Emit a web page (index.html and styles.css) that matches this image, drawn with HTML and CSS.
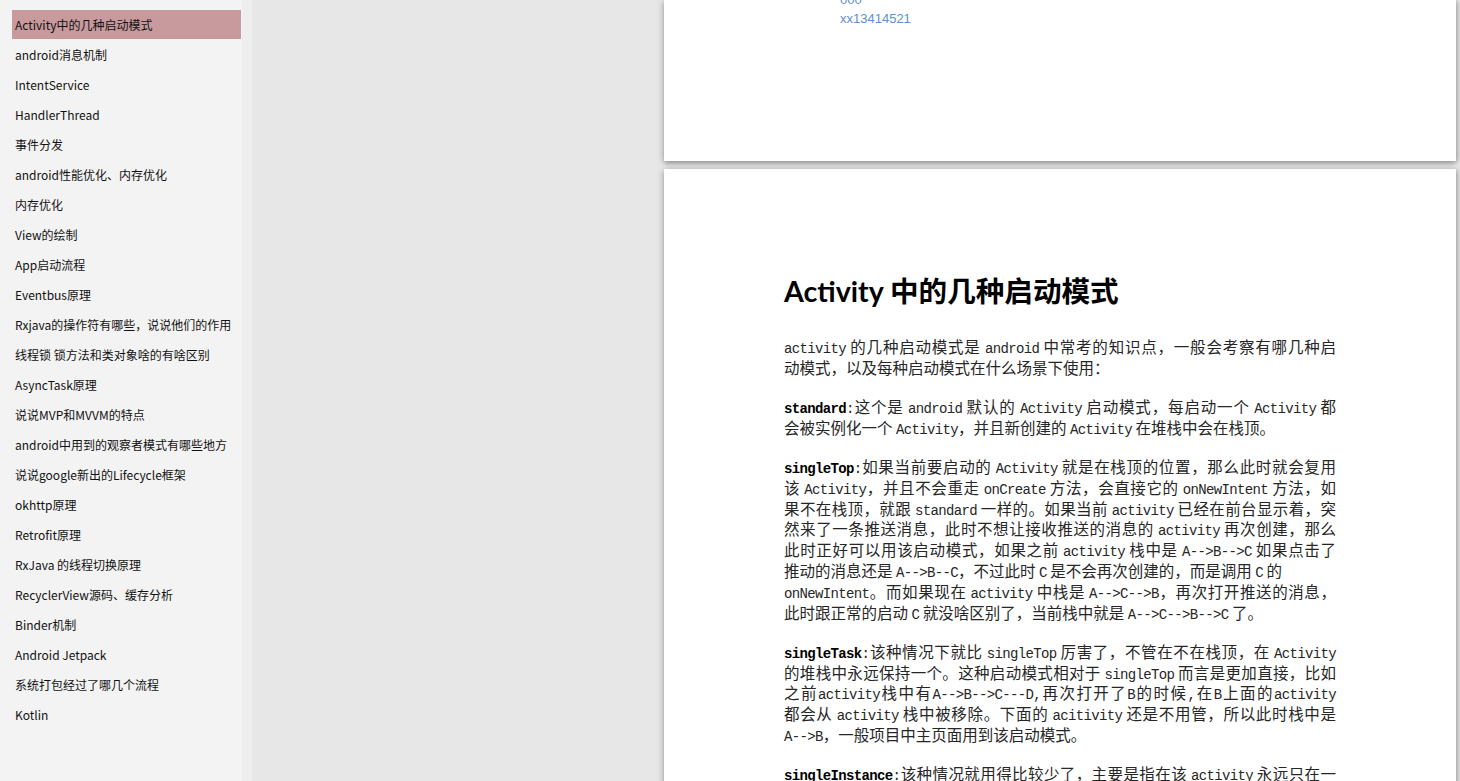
FILE: index.html
```html
<!DOCTYPE html>
<html lang="zh-CN">
<head>
<meta charset="utf-8">
<title>Activity中的几种启动模式</title>
<link rel="stylesheet" href="styles.css">
</head>
<body>
<aside class="sidebar">
  <ul class="toc">
    <li class="item active">Activity中的几种启动模式</li>
    <li class="item">android消息机制</li>
    <li class="item">IntentService</li>
    <li class="item">HandlerThread</li>
    <li class="item">事件分发</li>
    <li class="item">android性能优化、内存优化</li>
    <li class="item">内存优化</li>
    <li class="item">View的绘制</li>
    <li class="item">App启动流程</li>
    <li class="item">Eventbus原理</li>
    <li class="item">Rxjava的操作符有哪些，说说他们的作用</li>
    <li class="item">线程锁 锁方法和类对象啥的有啥区别</li>
    <li class="item">AsyncTask原理</li>
    <li class="item">说说MVP和MVVM的特点</li>
    <li class="item">android中用到的观察者模式有哪些地方</li>
    <li class="item">说说google新出的Lifecycle框架</li>
    <li class="item">okhttp原理</li>
    <li class="item">Retrofit原理</li>
    <li class="item">RxJava 的线程切换原理</li>
    <li class="item">RecyclerView源码、缓存分析</li>
    <li class="item">Binder机制</li>
    <li class="item">Android Jetpack</li>
    <li class="item">系统打包经过了哪几个流程</li>
    <li class="item">Kotlin</li>
  </ul>
</aside>
<div class="gutter"></div>
<main class="viewer">
  <section class="page page-cover">
    <div class="cover-line">000</div>
    <div class="cover-line">xx13414521</div>
  </section>
  <section class="page page-doc">
    <h1 class="title">Activity 中的几种启动模式</h1>
    <p class="para">
      <span class="ln j"><span class="m">activity</span> 的几种启动模式是 <span class="m">android</span> 中常考的知识点，一般会考察有哪几种启</span>
      <span class="ln">动模式，以及每种启动模式在什么场景下使用：</span>
    </p>
    <p class="para">
      <span class="ln j"><b class="m">standard</b><span class="m">:</span>这个是 <span class="m">android</span> 默认的 <span class="m">Activity</span> 启动模式，每启动一个 <span class="m">Activity</span> 都</span>
      <span class="ln">会被实例化一个 <span class="m">Activity</span>，并且新创建的 <span class="m">Activity</span> 在堆栈中会在栈顶。</span>
    </p>
    <p class="para">
      <span class="ln j"><b class="m">singleTop</b><span class="m">:</span>如果当前要启动的 <span class="m">Activity</span> 就是在栈顶的位置，那么此时就会复用</span>
      <span class="ln j">该 <span class="m">Activity</span>，并且不会重走 <span class="m">onCreate</span> 方法，会直接它的 <span class="m">onNewIntent</span> 方法，如</span>
      <span class="ln j">果不在栈顶，就跟 <span class="m">standard</span> 一样的。如果当前 <span class="m">activity</span> 已经在前台显示着，突</span>
      <span class="ln j">然来了一条推送消息，此时不想让接收推送的消息的 <span class="m">activity</span> 再次创建，那么</span>
      <span class="ln j">此时正好可以用该启动模式，如果之前 <span class="m">activity</span> 栈中是 <span class="m">A--&gt;B--&gt;C</span> 如果点击了</span>
      <span class="ln">推动的消息还是 <span class="m">A--&gt;B--C</span>，不过此时 <span class="m">C</span> 是不会再次创建的，而是调用 <span class="m">C</span> 的</span>
      <span class="ln j"><span class="m">onNewIntent</span>。而如果现在 <span class="m">activity</span> 中栈是 <span class="m">A--&gt;C--&gt;B</span>，再次打开推送的消息，</span>
      <span class="ln">此时跟正常的启动 <span class="m">C</span> 就没啥区别了，当前栈中就是 <span class="m">A--&gt;C--&gt;B--&gt;C</span> 了。</span>
    </p>
    <p class="para">
      <span class="ln j"><b class="m">singleTask</b><span class="m">:</span>该种情况下就比 <span class="m">singleTop</span> 厉害了，不管在不在栈顶，在 <span class="m">Activity</span></span>
      <span class="ln j">的堆栈中永远保持一个。这种启动模式相对于 <span class="m">singleTop</span> 而言是更加直接，比如</span>
      <span class="ln j">之前<span class="m">activity</span>栈中有<span class="m">A--&gt;B--&gt;C---D,</span>再次打开了<span class="m">B</span>的时候<span class="m">,</span>在<span class="m">B</span>上面的<span class="m">activity</span></span>
      <span class="ln j">都会从 <span class="m">activity</span> 栈中被移除。下面的 <span class="m">acitivity</span> 还是不用管，所以此时栈中是</span>
      <span class="ln"><span class="m">A--&gt;B</span>，一般项目中主页面用到该启动模式。</span>
    </p>
    <p class="para">
      <span class="ln j"><b class="m">singleInstance</b><span class="m">:</span>该种情况就用得比较少了，主要是指在该 <span class="m">activity</span> 永远只在一</span>
    </p>
  </section>
</main>
</body>
</html>
```

FILE: styles.css
```css
html, body {
  margin: 0;
  padding: 0;
  height: 781px;
  overflow: hidden;
}

body {
  display: flex;
  background: #e7e7e7;
  font-family: "Noto Sans CJK SC", sans-serif;
}

.sidebar {
  width: 242px;
  flex: 0 0 242px;
  background: #f3f3f3;
  height: 781px;
}

.toc {
  list-style: none;
  margin: 0;
  padding: 10px 1px 0 12px;
}

.item {
  height: 30px;
  line-height: 30px;
  padding-left: 3px;
  font-size: 12px;
  color: #111;
  white-space: nowrap;
}

.item.active {
  background: #c8999d;
  height: 29px;
  line-height: 29px;
  margin-bottom: 1px;
}

.gutter {
  width: 10px;
  flex: 0 0 10px;
  background: #eeeeee;
}

.viewer {
  flex: 1;
  padding-left: 412px;
  overflow: hidden;
}

.page {
  width: 792px;
  background: #ffffff;
  box-shadow: 0 3px 5px rgba(0, 0, 0, 0.28), -3px 0 6px rgba(0, 0, 0, 0.08), 3px 0 4px rgba(0, 0, 0, 0.12);
}

.page-cover {
  height: 161px;
  padding-left: 176px;
  box-sizing: border-box;
  overflow: hidden;
}

.cover-line {
  font-family: "Liberation Sans", "Noto Sans CJK SC", sans-serif;
  font-size: 13px;
  line-height: 19px;
  color: #5d8fd4;
}

.cover-line:first-child {
  margin-top: -10px;
}

.page-doc {
  margin-top: 8px;
  height: 900px;
  box-sizing: border-box;
  padding: 104px 120px 0 120px;
}

.title {
  margin: 0 0 27px 0;
  font-family: "Lato", "Noto Sans CJK SC", sans-serif;
  font-weight: 700;
  font-size: 28.6px;
  line-height: 36px;
  color: #000;
}

.para {
  margin: 0 0 18.3px 0;
  font-family: "Noto Sans CJK SC", sans-serif;
  font-size: 15.5px;
  line-height: 20.83px;
  color: #262626;
  width: 552px;
}

.ln {
  display: block;
  height: 20.83px;
  white-space: nowrap;
  text-align: left;
}

.ln.j {
  text-align: justify;
  text-align-last: justify;
  white-space: normal;
}

.m {
  font-family: "Liberation Mono", monospace;
  font-size: 14px;
  letter-spacing: -0.65px;
  font-weight: 400;
}

b.m {
  font-weight: 700;
  color: #000;
}
```
